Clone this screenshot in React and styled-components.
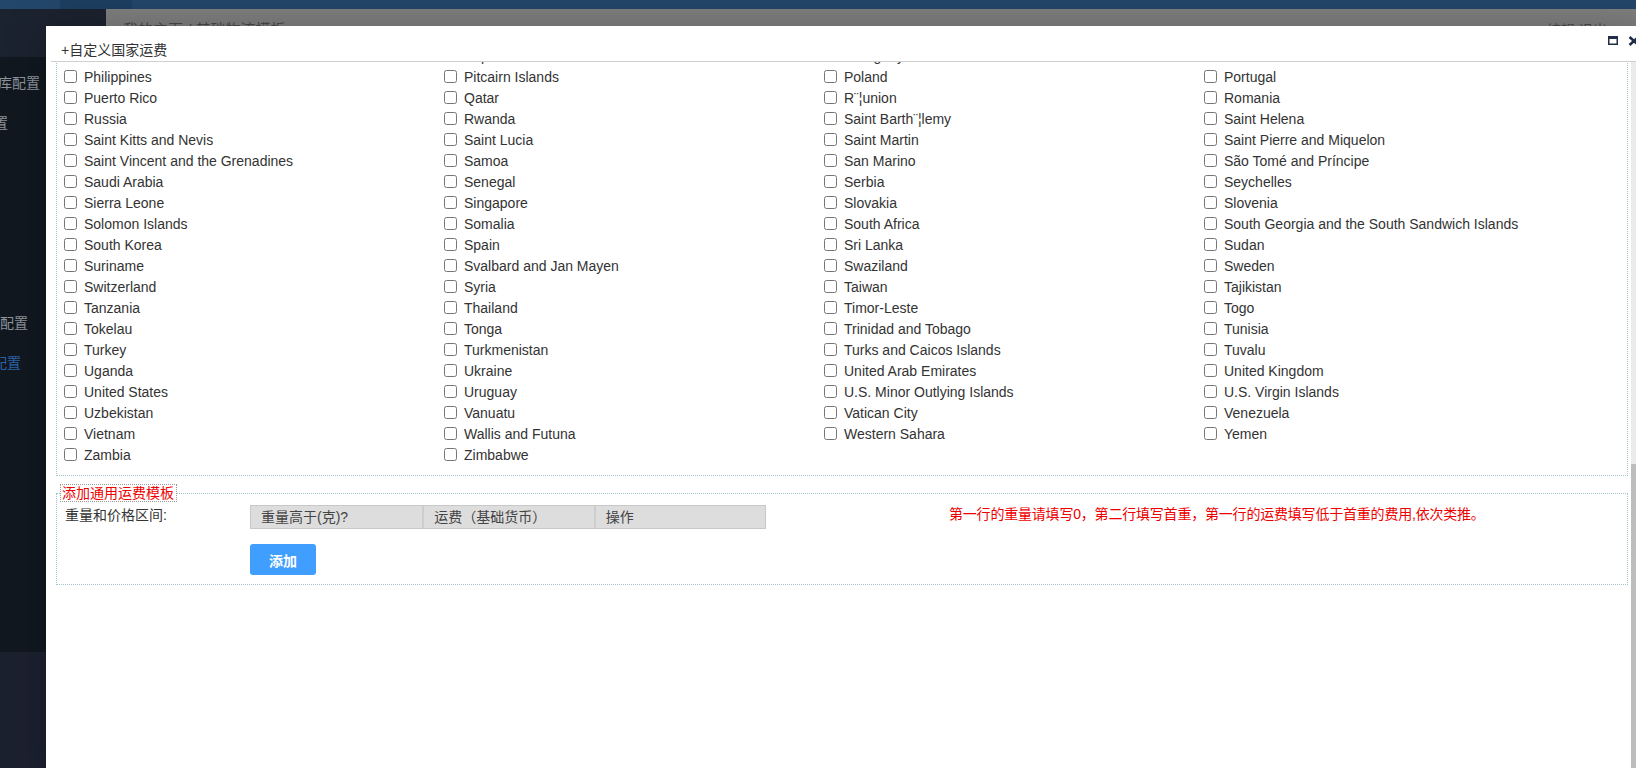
import React, { useLayoutEffect, useRef } from "react"
import styled, { createGlobalStyle } from "styled-components"

const GlobalStyle = createGlobalStyle`
  html, body {
    margin: 0;
    padding: 0;
    overflow: hidden;
  }
  body {
    font-family: "Liberation Sans", Arial, "Noto Sans CJK SC", sans-serif;
    font-size: 14px;
    color: #333;
  }
`

const Page = styled.div`
  position: relative;
  width: 1636px;
  height: 768px;
  overflow: hidden;
  display: flex;
  flex-direction: column;
  background: #808080;
`

const TopBar = styled.div`
  flex-shrink: 0;
  height: 9px;
  display: flex;
  background: #22466a;
`

const TopSeg = styled.div`
  width: ${p => p.$w}px;
  background: ${p => p.$bg};
`

const Frame = styled.div`
  flex: 1;
  display: flex;
  min-height: 0;
`

const Sidebar = styled.aside`
  width: 106px;
  flex-shrink: 0;
  display: flex;
  flex-direction: column;
  background: #1c2130;
`

const Logo = styled.div`
  height: 48px;
  background: #1c2330;
`

const Menu = styled.nav`
  height: 595px;
  padding-top: 5px;
  box-sizing: border-box;
  background: #111820;
`

const MenuItem = styled.div`
  height: 40px;
  display: flex;
  align-items: center;
  justify-content: flex-end;
  padding-right: ${p => p.$inset}px;
  overflow: hidden;
  white-space: nowrap;
  font-size: 14px;
  color: ${p => (p.$active ? "#2a64a8" : "#8d939b")};
`

const Main = styled.main`
  flex: 1;
  background: #808080;
`

const Crumbs = styled.div`
  display: flex;
  padding: 10px 29px 0 17px;
  font-size: 15px;
  line-height: 22px;
  color: #4a4a4a;
`

const CrumbRight = styled.span`
  margin-left: auto;
  font-size: 14px;
`

const Modal = styled.section`
  position: absolute;
  left: 46px;
  top: 26px;
  width: 1602px;
  height: 760px;
  display: flex;
  flex-direction: column;
  background: #fff;
  box-shadow: 1px 1px 40px rgba(0, 0, 0, 0.25);
`

const TitleBar = styled.header`
  flex-shrink: 0;
  height: 36px;
  box-sizing: border-box;
  margin-left: 5px;
  display: flex;
  border-bottom: 1px solid #d0d0d0;
`

const Title = styled.div`
  padding: 14px 0 0 10px;
  line-height: 20px;
  font-size: 14px;
  color: #333;
`

const Tools = styled.div`
  margin-left: auto;
  padding: 10px 8px 0 0;
  display: flex;
  gap: 10px;
  color: #1f2d46;
`

const Body = styled.div`
  flex: 1;
  display: flex;
  min-height: 0;
`

const ScrollArea = styled.div`
  position: relative;
  flex: 1;
  overflow: hidden;
  padding: 0 3px 0 10px;
`

const Content = styled.div`
  padding-bottom: 260px;
`

const CountryBox = styled.div`
  border: 1px dotted #a3c4cb;
  padding: 4px 0 10px 3px;
  display: grid;
  grid-template-columns: repeat(4, 380px);
  grid-auto-rows: 21px;
`

const Country = styled.label`
  display: flex;
  align-items: center;
  white-space: nowrap;
  font-size: 14px;
  color: #333;
`

const Check = styled.input`
  width: 13px;
  height: 13px;
  margin: 0 7px 0 4px;
`

const Section = styled.fieldset`
  margin: 8px 0 0;
  padding: 3px 0 9px 3px;
  border: 1px dotted #a3c4cb;
  min-width: 0;
`

const Legend = styled.legend`
  padding: 0 2px 0 1px;
  border: 1px dotted #999;
  font-size: 14px;
  line-height: 16px;
  color: #e00;
`

const RangeGrid = styled.div`
  display: grid;
  grid-template-columns: 185px 516px auto;
  row-gap: 15px;
  padding-left: 5px;
`

const FieldLabel = styled.div`
  line-height: 20px;
  color: #333;
`

const HeadTable = styled.div`
  display: grid;
  grid-template-columns: repeat(3, 1fr);
  border: 1px solid #c8c8c8;
  background: #dddddd;
`

const HeadCell = styled.div`
  height: 22px;
  line-height: 22px;
  padding-left: 10px;
  color: #444;
  & + & {
    border-left: 2px solid #cdcdcd;
  }
`

const Note = styled.div`
  padding: 0 0 0 183px;
  font-size: 14px;
  letter-spacing: -0.2px;
  line-height: 18px;
  color: #e00;
  white-space: nowrap;
`

const AddButton = styled.button`
  grid-column: 2;
  justify-self: start;
  width: 66px;
  height: 31px;
  border: 0;
  border-radius: 3px;
  background: #409eff;
  color: #fff;
  font-family: inherit;
  font-size: 14px;
  font-weight: bold;
`

const Scrollbar = styled.div`
  width: 17px;
  flex-shrink: 0;
  background: #ebebeb;
`

const Thumb = styled.div`
  height: 100%;
  background: #bdbdbd;
`

const countries = [
  "Oman", "Pakistan", "Palau", "Palestinian Territory",
  "Panama", "Papua New Guinea", "Paraguay", "Peru",
  "Philippines", "Pitcairn Islands", "Poland", "Portugal",
  "Puerto Rico", "Qatar", "R¨¦union", "Romania",
  "Russia", "Rwanda", "Saint Barth¨¦lemy", "Saint Helena",
  "Saint Kitts and Nevis", "Saint Lucia", "Saint Martin", "Saint Pierre and Miquelon",
  "Saint Vincent and the Grenadines", "Samoa", "San Marino", "São Tomé and Príncipe",
  "Saudi Arabia", "Senegal", "Serbia", "Seychelles",
  "Sierra Leone", "Singapore", "Slovakia", "Slovenia",
  "Solomon Islands", "Somalia", "South Africa", "South Georgia and the South Sandwich Islands",
  "South Korea", "Spain", "Sri Lanka", "Sudan",
  "Suriname", "Svalbard and Jan Mayen", "Swaziland", "Sweden",
  "Switzerland", "Syria", "Taiwan", "Tajikistan",
  "Tanzania", "Thailand", "Timor-Leste", "Togo",
  "Tokelau", "Tonga", "Trinidad and Tobago", "Tunisia",
  "Turkey", "Turkmenistan", "Turks and Caicos Islands", "Tuvalu",
  "Uganda", "Ukraine", "United Arab Emirates", "United Kingdom",
  "United States", "Uruguay", "U.S. Minor Outlying Islands", "U.S. Virgin Islands",
  "Uzbekistan", "Vanuatu", "Vatican City", "Venezuela",
  "Vietnam", "Wallis and Futuna", "Western Sahara", "Yemen",
  "Zambia", "Zimbabwe",
]

const menu = [
  { text: "海外仓库配置", inset: 66 },
  { text: "物流设置", inset: 98 },
  { text: "", inset: 0 },
  { text: "", inset: 0 },
  { text: "", inset: 0 },
  { text: "", inset: 0 },
  { text: "仓库费配置", inset: 78 },
  { text: "运费配置", inset: 85, active: true },
]

function MaxIcon() {
  return (
    <svg width="10" height="9" viewBox="0 0 10 9">
      <rect x="0.75" y="0.75" width="8.5" height="7.5" fill="none" stroke="currentColor" strokeWidth="1.5" />
      <rect x="0" y="0" width="10" height="3" fill="currentColor" />
    </svg>
  )
}

function CloseIcon() {
  return (
    <svg width="12" height="10" viewBox="0 0 12 10">
      <path d="M1.5 1 L10.5 9 M10.5 1 L1.5 9" stroke="currentColor" strokeWidth="2.6" />
    </svg>
  )
}

export default function App() {
  const scrollRef = useRef(null)
  const anchorRef = useRef(null)

  useLayoutEffect(() => {
    if (scrollRef.current && anchorRef.current) {
      scrollRef.current.scrollTop = anchorRef.current.offsetTop - 4
    }
  }, [])

  return (
    <Page>
      <GlobalStyle />
      <TopBar>
        <TopSeg $w={60} $bg="#23476b" />
        <TopSeg $w={72} $bg="#1e3f62" />
      </TopBar>
      <Frame>
        <Sidebar>
          <Logo />
          <Menu>
            {menu.map((m, i) => (
              <MenuItem key={i} $inset={m.inset} $active={m.active}>
                {m.text}
              </MenuItem>
            ))}
          </Menu>
        </Sidebar>
        <Main>
          <Crumbs>
            <span>我的主页 / 基础物流模板</span>
            <CrumbRight>编辑 退出</CrumbRight>
          </Crumbs>
        </Main>
      </Frame>

      <Modal>
        <TitleBar>
          <Title>+自定义国家运费</Title>
          <Tools>
            <MaxIcon />
            <CloseIcon />
          </Tools>
        </TitleBar>
        <Body>
          <ScrollArea ref={scrollRef}>
            <Content>
              <CountryBox>
                {countries.map(name => (
                  <Country key={name} ref={name === "Philippines" ? anchorRef : undefined}>
                    <Check type="checkbox" />
                    {name}
                  </Country>
                ))}
              </CountryBox>
              <Section>
                <Legend>添加通用运费模板</Legend>
                <RangeGrid>
                  <FieldLabel>重量和价格区间:</FieldLabel>
                  <HeadTable>
                    <HeadCell>重量高于(克)?</HeadCell>
                    <HeadCell>运费（基础货币）</HeadCell>
                    <HeadCell>操作</HeadCell>
                  </HeadTable>
                  <Note>第一行的重量请填写0，第二行填写首重，第一行的运费填写低于首重的费用,依次类推。</Note>
                  <AddButton type="button">添加</AddButton>
                </RangeGrid>
              </Section>
            </Content>
          </ScrollArea>
          <Scrollbar>
            <Thumb style={{ marginTop: 402 }} />
          </Scrollbar>
        </Body>
      </Modal>
    </Page>
  )
}
